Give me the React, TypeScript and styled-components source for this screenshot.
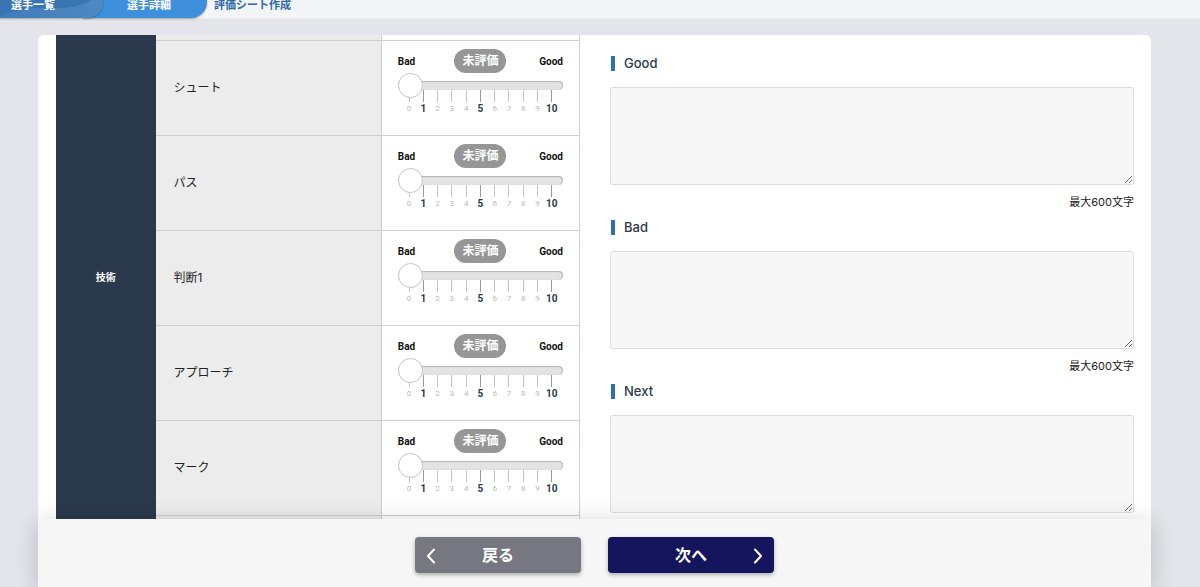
import { useState } from "react"
import styled, { createGlobalStyle } from "styled-components"

const SKILLS = ["シュート", "パス", "判断1", "アプローチ", "マーク"]
const COMMENTS = ["Good", "Bad", "Next"]
const SCALE = [0, 1, 2, 3, 4, 5, 6, 7, 8, 9, 10]

type RatingProps = {
  label: string
}

function Rating({ label }: RatingProps) {
  const [value, setValue] = useState(0)
  return (
    <RatingBox>
      <RatingHead>
        <RatingEnd>Bad</RatingEnd>
        <Pill>{value === 0 ? "未評価" : value}</Pill>
        <RatingEnd $right>Good</RatingEnd>
      </RatingHead>
      <Range
        type="range"
        min={0}
        max={10}
        value={value}
        aria-label={label}
        onChange={e => setValue(Number(e.target.value))}
      />
      <Ticks>
        {SCALE.map(n => (
          <Tick key={n} $strong={n === 1 || n === 5 || n === 10}>{n}</Tick>
        ))}
      </Ticks>
    </RatingBox>
  )
}

type CommentProps = {
  title: string
}

function Comment({ title }: CommentProps) {
  const id = `comment-${title.toLowerCase()}`
  return (
    <CommentBox>
      <CommentLabel htmlFor={id}>{title}</CommentLabel>
      <CommentArea id={id} maxLength={600} />
      <CommentNote>最大600文字</CommentNote>
    </CommentBox>
  )
}

export default function App() {
  return (
    <>
      <GlobalStyle />
      <Page>
        <Steps>
          <Step href="#list" $variant="done">
            <StepArt viewBox="0 0 103 26" preserveAspectRatio="none" aria-hidden="true">
              <path d="M0 0H100C92 12 72 17 50 16 30 15 14 19 0 24Z" fill="#3a75b3" />
            </StepArt>
            <span>選手一覧</span>
          </Step>
          <Step href="#detail" $variant="current"><span>選手詳細</span></Step>
          <Step href="#sheet" $variant="next"><span>評価シート作成</span></Step>
        </Steps>
        <Panel>
          <Content>
            <Sheet>
              <colgroup>
                <SheetCol $width={19} />
                <SheetCol $width={43} />
                <SheetCol $width={38} />
              </colgroup>
              <tbody>
                <EdgeRow $height={5}>
                  <Category rowSpan={SKILLS.length + 2} scope="rowgroup">技術</Category>
                  <Skill as="td" />
                  <Score />
                </EdgeRow>
                {SKILLS.map(skill => (
                  <Row key={skill}>
                    <Skill scope="row" $line>{skill}</Skill>
                    <Score $line><Rating label={skill} /></Score>
                  </Row>
                ))}
                <EdgeRow $height={4}>
                  <Skill as="td" $line />
                  <Score $line />
                </EdgeRow>
              </tbody>
            </Sheet>
            <Comments>
              {COMMENTS.map(title => <Comment key={title} title={title} />)}
            </Comments>
          </Content>
          <Footer>
            <FooterButton type="button">
              <Chevron $side="left" viewBox="0 0 10 16" aria-hidden="true">
                <path d="M8 1.5 2 8l6 6.5" />
              </Chevron>
              戻る
            </FooterButton>
            <FooterButton type="button" $primary>
              次へ
              <Chevron $side="right" viewBox="0 0 10 16" aria-hidden="true">
                <path d="M2 1.5 8 8l-6 6.5" />
              </Chevron>
            </FooterButton>
          </Footer>
        </Panel>
      </Page>
    </>
  )
}

const GlobalStyle = createGlobalStyle`
  * {
    box-sizing: border-box;
  }
  body {
    margin: 0;
    background: #e3e5ea;
    color: #222;
    font-family: Inter, "Noto Sans CJK JP", sans-serif;
  }
`

const Page = styled.div`
  display: flex;
  flex-direction: column;
  height: 100vh;
  overflow: hidden;
`

const Steps = styled.nav`
  display: flex;
  align-items: flex-end;
  flex: none;
  height: 18px;
  margin-bottom: 17px;
  background: #f4f5f8;
  box-shadow: 0 1px 1px #e9ebee;
`

const Step = styled.a<{ $variant: "done" | "current" | "next" }>`
  position: relative;
  display: flex;
  align-items: center;
  flex: none;
  height: 26px;
  border-radius: 0 0 16px 0;
  font-size: 11px;
  font-weight: 700;
  line-height: 16px;
  text-decoration: none;
  color: #fff;

  span {
    position: relative;
  }

  ${props => props.$variant === "done" && `
    z-index: 2;
    width: 103px;
    padding-left: 11px;
    overflow: hidden;
    background: linear-gradient(90deg, #3f7cba, #4f88c2);
    box-shadow: 0 1px 2px rgba(0, 0, 0, 0.3);
  `}
  ${props => props.$variant === "current" && `
    z-index: 1;
    width: 124px;
    margin-left: -20px;
    padding-left: 44px;
    background: #3f90dc;
    box-shadow: 0 1px 2px rgba(0, 0, 0, 0.3);
  `}
  ${props => props.$variant === "next" && `
    padding-left: 7px;
    color: #2f69a6;
  `}
`

const StepArt = styled.svg`
  position: absolute;
  inset: 0;
  width: 100%;
  height: 100%;
`

const Panel = styled.main`
  display: flex;
  flex-direction: column;
  flex: 1;
  min-height: 0;
  margin: 0 49px 0 38px;
`

const Content = styled.div`
  display: grid;
  grid-template-columns: 1fr 1fr;
  align-items: start;
  gap: 30px;
  flex: 1;
  min-height: 0;
  padding: 0 17px 0 18px;
  overflow: hidden;
  background: #fff;
  border-radius: 6px 6px 0 0;
`

const Sheet = styled.table`
  width: 100%;
  table-layout: fixed;
  border-collapse: separate;
  border-spacing: 0;
`

const SheetCol = styled.col<{ $width: number }>`
  width: ${props => props.$width}%;
`

const Row = styled.tr`
  height: 95px;
`

const EdgeRow = styled.tr<{ $height: number }>`
  height: ${props => props.$height}px;
`

const Category = styled.th`
  padding: 0 0 2px;
  background: #2b394c;
  color: #fff;
  font-size: 10px;
  font-weight: 700;
`

const Skill = styled.th<{ $line?: boolean }>`
  padding: 0 18px ${props => (props.$line ? 3 : 0)}px;
  border-top: ${props => (props.$line ? "1px solid #cfcfcf" : "none")};
  background: #ececec;
  font-size: 12px;
  font-weight: 400;
  text-align: left;
`

const Score = styled.td<{ $line?: boolean }>`
  padding: 0 16px;
  border: solid #cfcfcf;
  border-width: ${props => (props.$line ? "1px" : "0")} 1px 0 1px;
  vertical-align: top;
`

const RatingBox = styled.div`
  display: flex;
  flex-direction: column;
  padding-top: 8px;
`

const RatingHead = styled.div`
  display: grid;
  grid-template-columns: 1fr auto 1fr;
  align-items: center;
  height: 24px;
`

const RatingEnd = styled.span<{ $right?: boolean }>`
  color: #111;
  font-family: Roboto, sans-serif;
  font-size: 10px;
  font-weight: 700;
  text-align: ${props => (props.$right ? "right" : "left")};
`

const Pill = styled.span`
  min-width: 52px;
  padding: 0 8px;
  border-radius: 12px;
  background: #969696;
  color: #fff;
  font-size: 12px;
  font-weight: 700;
  line-height: 24px;
  text-align: center;
`

const Range = styled.input`
  position: relative;
  z-index: 1;
  width: 100%;
  height: 25px;
  margin: 0;
  appearance: none;
  background: none;
  cursor: pointer;

  &::-webkit-slider-runnable-track {
    height: 9px;
    border-radius: 5px;
    background: #e3e3e3;
    box-shadow: inset 0 1px 1px #b4b4b4, inset -1px 0 1px #bcbcbc;
  }
  &::-webkit-slider-thumb {
    width: 25px;
    height: 25px;
    margin-top: -8px;
    appearance: none;
    border: 1px solid #c4c4c4;
    border-radius: 50%;
    background: #fff;
  }
`

const Ticks = styled.div`
  display: grid;
  grid-template-columns: repeat(11, 1fr);
  margin: -8px 4px 0 4px;
`

const Tick = styled.span<{ $strong: boolean }>`
  display: flex;
  flex-direction: column;
  align-items: center;
  color: ${props => (props.$strong ? "#2b394c" : "#b9b9b9")};
  font-family: Roboto, sans-serif;
  font-size: ${props => (props.$strong ? 10 : 8)}px;
  font-weight: ${props => (props.$strong ? 700 : 400)};
  line-height: 14px;

  &::before {
    content: "";
    width: 1px;
    height: 12px;
    background: ${props => (props.$strong ? "#999" : "#c4c4c4")};
  }
`

const Comments = styled.div`
  display: flex;
  flex-direction: column;
  gap: 5px;
  padding-top: 18px;
`

const CommentBox = styled.div`
  display: flex;
  flex-direction: column;
`

const CommentLabel = styled.label`
  display: flex;
  align-items: center;
  gap: 9px;
  margin-bottom: 14px;
  padding-left: 1px;
  color: #2b394c;
  font-size: 13px;
  font-weight: 500;
  line-height: 20px;

  &::before {
    content: "";
    width: 4px;
    height: 15px;
    background: #2f6eb0;
  }
`

const CommentArea = styled.textarea`
  width: 100%;
  height: 98px;
  padding: 8px;
  border: 1px solid #dcdcdc;
  border-radius: 3px;
  background: #f7f7f7;
  font: inherit;
  font-size: 13px;
  resize: vertical;
`

const CommentNote = styled.span`
  margin-top: 7px;
  font-size: 11px;
  line-height: 20px;
  text-align: right;
`

const Footer = styled.footer`
  position: relative;
  z-index: 3;
  display: flex;
  justify-content: center;
  gap: 27px;
  flex: none;
  height: 68px;
  padding-top: 18px;
  background: #f6f6f6;
  box-shadow: 0 4px 24px rgba(0, 0, 0, 0.2);
`

const FooterButton = styled.button<{ $primary?: boolean }>`
  position: relative;
  width: 166px;
  height: 36px;
  padding: 0 0 2px;
  border: none;
  border-radius: 4px;
  background: ${props => (props.$primary ? "#14155c" : "#767780")};
  box-shadow: 0 2px 4px rgba(0, 0, 0, 0.3);
  color: #fff;
  font-family: inherit;
  font-size: 16px;
  font-weight: 700;
  cursor: pointer;
`

const Chevron = styled.svg<{ $side: "left" | "right" }>`
  position: absolute;
  top: 11px;
  ${props => props.$side}: 11px;
  width: 10px;
  height: 16px;
  fill: none;
  stroke: #fff;
  stroke-width: 2;
  stroke-linecap: round;
  stroke-linejoin: round;
`
